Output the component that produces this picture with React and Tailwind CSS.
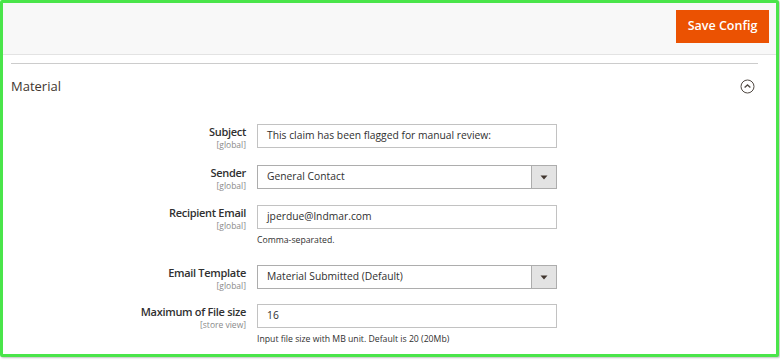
import React from 'react';

const Caret = () => (
  <svg width="8" height="5" viewBox="0 0 8 5">
    <path d="M0.5 0.5 L7.5 0.5 L4 4.5 Z" fill="#41362f" />
  </svg>
);

function Row({ label, scope, children, note, className = '' }) {
  return (
    <div className={`flex ${className}`}>
      <div className="h-[24px] w-[236px] shrink-0 pr-[1px] pt-[1px] text-right">
        <div className="text-[11px] font-semibold leading-[14px] tracking-[-0.3px] text-[#303030]">{label}</div>
        <div className="text-[8.5px] leading-[11px] text-[#8a8a8a]">{scope}</div>
      </div>
      <div className="ml-[10px] w-[300px]">
        {children}
        {note && <div className="mt-[5px] text-[8.7px] leading-[12px] text-[#303030]">{note}</div>}
      </div>
    </div>
  );
}

function TextInput({ value }) {
  return (
    <div className="flex h-[24px] items-center border border-[#c2c2c2] bg-white px-[9px] text-[10.3px] text-[#303030]">
      {value}
    </div>
  );
}

function Select({ value }) {
  return (
    <div className="flex h-[24px] border border-[#adadad] bg-white text-[10.3px] text-[#303030]">
      <div className="flex flex-1 items-center px-[9px]">{value}</div>
      <div className="flex w-[25px] items-center justify-center border-l border-[#adadad] bg-[#e3e3e3]">
        <Caret />
      </div>
    </div>
  );
}

export default function App() {
  return (
    <div className="h-[360px] w-[780px] bg-white" style={{ fontFamily: '"Open Sans", Arial, sans-serif' }}>
      <div className="h-[357px] w-[779px] overflow-hidden rounded-[2px] border-[3px] border-[#4ae54a] bg-white shadow-[1px_1px_2px_rgba(0,0,0,0.25)]">
        {/* page actions */}
        <div className="flex h-[52px] justify-end border-b border-[#e3e3e3] bg-[#f8f8f8] pr-[7px] pt-[7px]">
          <button className="h-[33px] w-[93px] bg-[#eb5202] text-[12.5px] font-semibold text-white">
            Save Config
          </button>
        </div>

        <div className="pl-[8px] pr-[18px]">
          <div className="mt-[8px] border-t border-[#cccccc]" />
          <div className="flex h-[45px] items-center justify-between">
            <div className="text-[13px] font-medium text-[#41362f]">Material</div>
            <svg width="15" height="15" viewBox="0 0 15 15" className="mr-[3px]">
              <circle cx="7.5" cy="7.5" r="6.5" fill="none" stroke="#514943" strokeWidth="1" />
              <path d="M4.6 8.6 L7.5 5.9 L10.4 8.6" fill="none" stroke="#514943" strokeWidth="1.3" />
            </svg>
          </div>

          <div className="mt-[15px] flex flex-col">
            <Row label="Subject" scope="[global]">
              <TextInput value="This claim has been flagged for manual review:" />
            </Row>
            <Row label="Sender" scope="[global]" className="mt-[17px]">
              <Select value="General Contact" />
            </Row>
            <Row label="Recipient Email" scope="[global]" className="mt-[16px]" note="Comma-separated.">
              <TextInput value="jperdue@lndmar.com" />
            </Row>
            <Row label="Email Template" scope="[global]" className="mt-[19px]">
              <Select value="Material Submitted (Default)" />
            </Row>
            <Row label="Maximum of File size" scope="[store view]" className="mt-[15px]" note="Input file size with MB unit. Default is 20 (20Mb)">
              <TextInput value="16" />
            </Row>
          </div>
        </div>
      </div>
    </div>
  );
}
